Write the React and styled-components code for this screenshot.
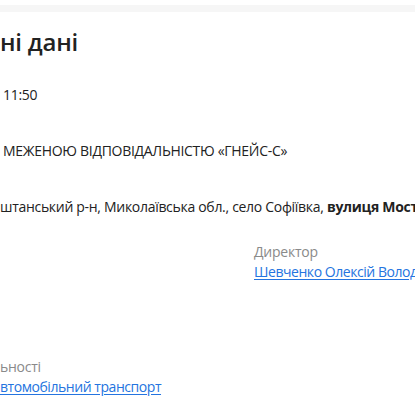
import React from "react";
import styled, { createGlobalStyle } from "styled-components";

const GlobalStyle = createGlobalStyle`
    html, body {
        margin: 0;
        padding: 0;
        background: #ffffff;
    }

    body {
        font-family: "Open Sans", "Noto Sans", Arial, sans-serif;
        color: #222222;
        overflow: hidden;
    }
`;

const TopStrip = styled.div`
    height: 7px;
    margin-top: 5px;
    background-color: #f6f6f6;
`;

const CardStyled = styled.section`
    padding: 14px 0 0 0;
    overflow: hidden;
    width: 415px;
`;

const Title = styled.h2`
    margin: 0;
    font-size: 24px;
    line-height: 32px;
    font-weight: 600;
    letter-spacing: -0.2px;
    color: #222222;
`;

const Line = styled.p`
    margin: ${({ $top }) => $top}px 0 0 ${({ $indent }) => $indent || 0}px;
    font-size: 14px;
    line-height: 20px;
    letter-spacing: -0.3px;
    white-space: nowrap;

    b {
        font-weight: 700;
    }
`;

const Columns = styled.div`
    display: grid;
    grid-template-columns: 254px 1fr;
    margin-top: ${({ $top }) => $top}px;
`;

const Field = styled.div`
    display: flex;
    flex-direction: column;
    margin-top: ${({ $top }) => $top || 0}px;
    white-space: nowrap;
`;

const Label = styled.span`
    font-size: 14px;
    line-height: 20px;
    letter-spacing: -0.25px;
    color: #8a8a8a;
`;

const Link = styled.a`
    font-size: 14px;
    line-height: 20px;
    letter-spacing: -0.45px;
    color: #2474e0;
    text-decoration: underline;
    text-underline-offset: 2px;
`;

const App = () => {
    return (
        <>
            <GlobalStyle />
            <TopStrip />
            <CardStyled>
                <Title>ні дані</Title>
                <Line $top={27} $indent={3}>11:50</Line>
                <Line $top={36} $indent={3}>
                    МЕЖЕНОЮ ВІДПОВІДАЛЬНІСТЮ «ГНЕЙС-С»
                </Line>
                <Line $top={36}>
                    штанський р-н, Миколаївська обл., село Софіївка,{" "}
                    <b>вулиця Мостова</b>
                </Line>
                <Columns $top={25}>
                    <Field />
                    <Field>
                        <Label>Директор</Label>
                        <Link href="#">Шевченко Олексій Володимирович</Link>
                    </Field>
                </Columns>
                <Field $top={75}>
                    <Label>ьності</Label>
                    <Link href="#">втомобільний транспорт</Link>
                </Field>
            </CardStyled>
        </>
    );
};

export default App;
